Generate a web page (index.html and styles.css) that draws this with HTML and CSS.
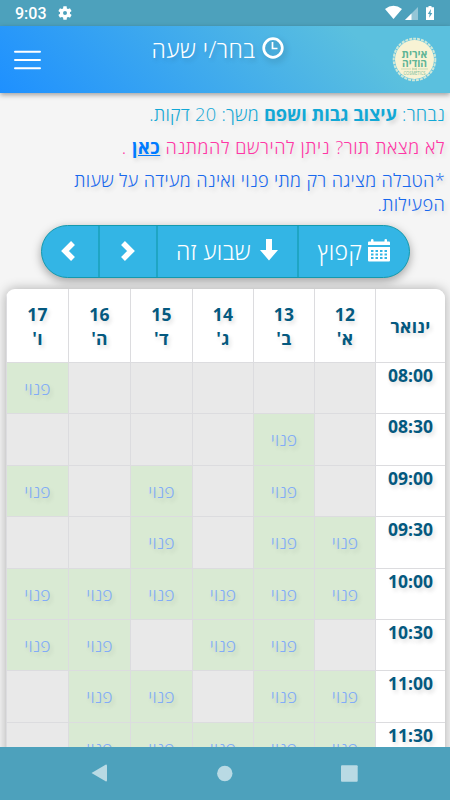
FILE: index.html
```html
<!DOCTYPE html>
<html lang="he" dir="rtl">
<head>
    <meta charset="UTF-8">
    <meta name="viewport" content="width=device-width, initial-scale=1.0">
    <title>בחר/י שעה</title>
    <link rel="stylesheet" href="styles.css">
</head>
<body>
    <div class="status-bar">
        <span class="clock">9:03</span>
        <svg class="gear" width="16" height="16" viewBox="0 0 24 24"><path fill="#fff" d="M19.4 13c0-.3.1-.6.1-1s0-.7-.1-1l2.100-1.600c.2-.2.3-.4.100-.7l-2-3.400c-.1-.2-.4-.3-.6-.2l-2.500 1c-.5-.4-1.100-.7-1.700-1L14.500 2.400c0-.2-.2-.4-.5-.4h-4c-.3 0-.5.2-.5.4l-.4 2.700c-.6.3-1.200.6-1.700 1l-2.500-1c-.2-.1-.5 0-.6.200l-2 3.400c-.1.3-.1.5.1.700L4.600 11c0 .3-.1.700-.1 1s0 .7.100 1l-2.200 1.600c-.2.2-.2.400-.1.700l2 3.400c.1.200.4.300.6.200l2.500-1c.5.4 1.100.7 1.700 1l.4 2.700c0 .2.200.4.500.4h4c.3 0 .5-.2.5-.4l.4-2.700c.6-.3 1.200-.6 1.700-1l2.500 1c.2.100.5 0 .6-.2l2-3.400c.1-.3.100-.5-.1-.7zM12 15a3 3 0 1 1 0-6 3 3 0 0 1 0 6z"/></svg>
        <svg class="signals" width="50" height="16" viewBox="0 0 50 16">
            <path fill="#fff" d="M0 4Q8.500-2.500 17 4L8.500 14z"/>
            <path fill="#fff" fill-opacity=".4" d="M33 2v13H20z"/>
            <path fill="#fff" d="M26.500 8.500V15H20z"/>
            <path fill="#fff" d="M43.500 1h3v1.200h2.500V15h-8V2.200h2.500z"/>
            <path fill="#4da1bc" d="M46 4l-3.200 5h1.800l-.4 3.700L47.300 8h-1.800z"/>
        </svg>
    </div>

    <header class="top-bar">
        <svg class="logo" width="45" height="47" viewBox="0 0 45 47">
            <circle cx="22.500" cy="23.500" r="20.800" fill="none" stroke="#cfe8d8" stroke-width="2" stroke-dasharray="3 1"/>
            <circle cx="22.500" cy="23.500" r="19.500" fill="#f8f3d4"/>
            <text class="logo-name" x="22.500" y="21.500" textLength="26" lengthAdjust="spacingAndGlyphs">אירית</text>
            <text class="logo-name" x="22.500" y="31" textLength="25" lengthAdjust="spacingAndGlyphs">הודיה</text>
            <path d="M9 33h10M26 33h10M20.500 32l4 2v-2l-4 2z" fill="none" stroke="#b9d3aa" stroke-width=".7"/>
            <text class="logo-sub" x="22.500" y="38.700" textLength="22" lengthAdjust="spacingAndGlyphs">COSMETICS</text>
        </svg>
        <h1>
            <svg width="22" height="22" viewBox="0 0 22 22"><circle cx="11" cy="11" r="9.300" fill="none" stroke="#fff" stroke-width="2.700"/><path d="M10.500 5v6.500h5" fill="none" stroke="#fff" stroke-width="1.700"/></svg>
            <span>בחר/י שעה</span>
        </h1>
        <svg class="menu" width="28" height="20" viewBox="0 0 28 20"><path d="M2 1.800h25M2 10h25M2 18.200h25" stroke="#fff" stroke-width="2" stroke-linecap="round"/></svg>
    </header>

    <main>
        <div class="info">
            <p class="selected">נבחר: <b>עיצוב גבות ושפם</b> משך: 20 דקות.</p>
            <p class="waiting">לא מצאת תור? ניתן להירשם להמתנה <a href="#">כאן</a> .</p>
            <p class="note">*הטבלה מציגה רק מתי פנוי ואינה מעידה על שעות הפעילות.</p>
        </div>

        <div class="week-nav">
            <button class="jump">
                <svg width="22" height="24" viewBox="0 0 22 24"><path fill="#fff" fill-rule="evenodd" d="M1 2.500h2V1q0-1 1.200-1t1.300 1v1.500h11V1q0-1 1.300-1T19 1v1.500h2q1 0 1 1V6H0V3.500q0-1 1-1zM0 8h22v13.500q0 1-1 1H1q-1 0-1-1zM3 11v2h2.500v-2zm4.500 0v2H10v-2zm4.500 0v2h2.500v-2zm4.500 0v2H19v-2zM3 14.500v2h2.500v-2zm4.500 0v2H10v-2zm4.500 0v2h2.500v-2zm4.500 0v2H19v-2zM3 18v2h2.500v-2zm4.500 0v2H10v-2zm4.500 0v2h2.500v-2zm4.500 0v2H19v-2z"/></svg>
                <span>קפוץ</span>
            </button>
            <button class="this-week">
                <svg width="18" height="22" viewBox="0 0 18 22"><path fill="#fff" d="M6 0h6v11h6L9 21.500 0 11h6z"/></svg>
                <span>שבוע זה</span>
            </button>
            <button class="arrow"><svg width="16" height="20" viewBox="0 0 16 20"><path d="M3 2l8 8-8 8" fill="none" stroke="#fff" stroke-width="5.500"/></svg></button>
            <button class="arrow last"><svg width="16" height="20" viewBox="0 0 16 20"><path d="M13 2l-8 8 8 8" fill="none" stroke="#fff" stroke-width="5.500"/></svg></button>
        </div>

        <div class="schedule" id="schedule">
            <div class="head">ינואר</div>
            <div class="head">12<br>א'</div>
            <div class="head">13<br>ב'</div>
            <div class="head">14<br>ג'</div>
            <div class="head">15<br>ד'</div>
            <div class="head">16<br>ה'</div>
            <div class="head">17<br>ו'</div>
        </div>
    </main>

    <nav class="system-nav">
        <svg width="450" height="53" viewBox="0 0 450 53"><g fill="#b9dae4"><path d="M91.500 26L106 17.500q1 0 1 1v15q0 1-1 1z"/><circle cx="224.800" cy="26.500" r="7.700"/><rect x="341" y="18.300" width="16.700" height="16.500" rx="1"/></g></svg>
    </nav>

    <script>
        // 1 = פנוי, הסדר מיום א' עד יום ו'
        const rows = {
            '08:00': '000001',
            '08:30': '010000',
            '09:00': '010101',
            '09:30': '110100',
            '10:00': '111111',
            '10:30': '011011',
            '11:00': '110110',
            '11:30': '111110'
        };
        const schedule = document.getElementById('schedule');

        function addCell(className, text) {
            const cell = document.createElement('div');
            cell.className = className;
            cell.textContent = text;
            schedule.appendChild(cell);
        }

        for (const time in rows) {
            addCell('time', time);
            for (const slot of rows[time]) {
                addCell(slot === '1' ? 'slot free' : 'slot', slot === '1' ? 'פנוי' : '');
            }
        }
    </script>
</body>
</html>
```
FILE: styles.css
```css
* {
    box-sizing: border-box;
}
body {
    margin: 0;
    height: 800px;
    display: flex;
    flex-direction: column;
    overflow: hidden;
    background-color: #f5f5f5;
    font-family: "Open Sans", "Noto Sans", sans-serif;
    text-shadow: 2px 3px 4px rgba(0, 0, 0, 0.13);
}
.status-bar {
    direction: ltr;
    display: flex;
    align-items: center;
    flex: none;
    height: 26px;
    padding: 0 15px;
    background-color: #4da1bc;
    color: white;
    text-shadow: none;
}
.clock {
    font: 500 16px Roboto, sans-serif;
    width: 42px;
    padding-top: 1px;
}
.signals {
    margin-left: auto;
}
.top-bar {
    display: flex;
    justify-content: space-between;
    flex: none;
    height: 67px;
    padding: 0 13px;
    background: linear-gradient(45deg, #1e90ff, #5bc0de 80%);
    box-shadow: 0 2px 5px rgba(0, 0, 0, 0.35);
    color: white;
}
.logo {
    margin-top: 10px;
}
.logo-name {
    font: bold 11px "Open Sans", sans-serif;
    fill: #60b596;
    text-anchor: middle;
    text-shadow: none;
}
.logo-sub {
    font: 5px "Open Sans", sans-serif;
    fill: #78bd9d;
    text-anchor: middle;
    text-shadow: none;
}
.top-bar h1 {
    display: flex;
    gap: 6px;
    margin: 8px 0 0;
    font-size: 23px;
    font-weight: 350;
    letter-spacing: 0.5px;
    line-height: 30px;
}
.top-bar h1 svg {
    margin-top: 3px;
    margin-right: -2px;
    filter: drop-shadow(2px 3px 3px rgba(0, 0, 0, 0.2));
}
.menu {
    margin-top: 24px;
}
main {
    flex: 1;
    min-height: 0;
    overflow: hidden;
    padding: 9px 5px 0;
}
.info {
    font-size: 18.2px;
    font-weight: 350;
    letter-spacing: 0.27px;
    line-height: 24px;
}
.info p {
    margin: 0 0 9px;
}
.selected {
    color: #12a8d6;
}
.waiting {
    color: #ff36a5;
    letter-spacing: 0.57px;
}
.info .note {
    color: #1768ee;
    padding-left: 30px;
    letter-spacing: 0.33px;
}
.info b {
    font-weight: bold;
    letter-spacing: -0.05px;
}
.info a {
    color: #007bff;
    font-weight: bold;
}
.week-nav {
    display: flex;
    width: 369px;
    height: 53px;
    margin: 0 auto 11px;
    border: 1px solid #149aae;
    border-radius: 27px;
    overflow: hidden;
    background-color: #33b5e5;
    box-shadow: 0 3px 10px rgba(0, 0, 0, 0.35);
}
.week-nav button {
    display: flex;
    align-items: center;
    justify-content: center;
    padding: 0;
    border: none;
    border-left: 2px solid #1fa5c4;
    background: none;
    color: white;
    font-family: inherit;
    font-size: 23px;
    font-weight: 350;
    letter-spacing: 0.4px;
}
.week-nav .jump {
    width: 112px;
    gap: 6px;
    padding-left: 1px;
}
.week-nav .jump svg {
    margin-top: -2px;
}
.week-nav .this-week {
    width: 141px;
    gap: 9px;
}
.week-nav .this-week svg {
    margin-top: -4px;
}
.week-nav .this-week span,
.week-nav .jump span {
    margin-top: -2px;
}
.week-nav .arrow {
    width: 58px;
    padding-bottom: 2px;
}
.week-nav .last {
    border-left: none;
    width: 56px;
    padding-right: 4px;
}
.schedule {
    display: grid;
    grid-template-columns: 70px 61px 61px 61px 62px 62px 62px;
    grid-template-rows: 74px;
    grid-auto-rows: 51.4px;
    width: 439px;
    border-radius: 9px 9px 0 0;
    overflow: hidden;
    background-color: #e9e9e9;
    box-shadow: 0 0 12px rgba(0, 0, 0, 0.3);
    text-align: center;
}
.schedule div {
    border-left: 1px solid #dcdcdf;
    border-bottom: 1px solid #dcdcdf;
}
.head,
.time {
    background-color: white;
    color: #04597f;
    font-weight: bold;
    font-size: 17.5px;
    line-height: 24px;
}
.head {
    display: flex;
    align-items: center;
    justify-content: center;
    letter-spacing: 0.3px;
}
.slot {
    color: #82acf7;
    font-size: 17.5px;
    font-weight: 350;
    letter-spacing: 0.1px;
    line-height: 51px;
}
.free {
    background-color: #d9ead3;
}
.system-nav {
    flex: none;
    height: 53px;
    background-color: #4da1bc;
}
.system-nav svg {
    display: block;
}
```
